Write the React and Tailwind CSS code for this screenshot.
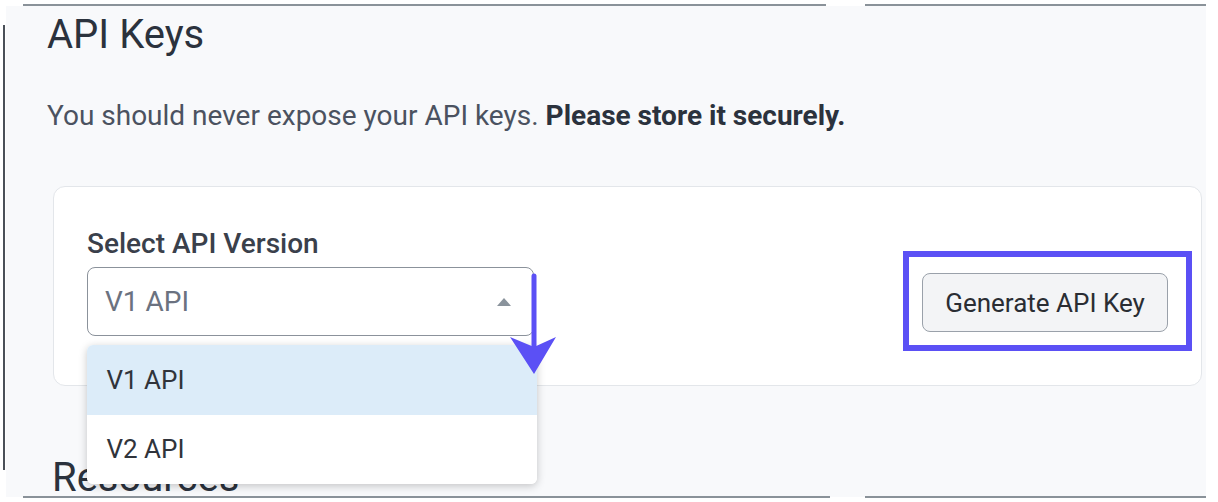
export default function App() {
  return (
    <div
      className="relative w-[1218px] h-[502px] overflow-hidden bg-white pt-[6px] pl-[6px]"
      style={{ fontFamily: "Roboto, 'Noto Sans', sans-serif" }}
    >
      {/* page */}
      <div className="w-[1200px] h-[491px] bg-[#f8f9fb] flex flex-col">
        <header className="pl-[41px] pt-[9px] flex flex-col">
          <h1 className="text-[40px] leading-none text-[#2b323d] font-normal">API Keys</h1>
          <p className="mt-[47px] text-[28px] leading-none text-[#4b5260]">
            You should never expose your API keys.{" "}
            <span className="font-bold text-[#2b323d]">Please store it securely.</span>
          </p>
        </header>

        <section className="ml-[47px] mt-[56px] w-[1149px] h-[200px] shrink-0 rounded-[12px] border border-[#e3e6ea] bg-white flex items-start">
          <div className="pl-[33px] pt-[43px] flex flex-col">
            <label className="text-[28px] leading-none font-medium text-[#3a404b]">Select API Version</label>
            <div className="relative mt-[9px] w-[447px] h-[69px] rounded-[8px] border-[1.5px] border-[#8b929b] flex items-center justify-between pl-[17px] pr-[21px]">
              <span className="text-[28px] leading-none text-[#6b7280]">V1 API</span>
              <svg width="16" height="10" viewBox="0 0 16 10">
                <path d="M1 9 L8 1 L15 9 Z" fill="#8a939c" />
              </svg>

              {/* open dropdown list */}
              <ul className="absolute left-[-1.5px] top-[77px] z-10 w-[450px] rounded-[6px] bg-white shadow-[0_2px_8px_rgba(0,0,0,0.22)] overflow-hidden flex flex-col">
                <li className="h-[70px] bg-[#dcecf9] flex items-center pl-[20px] text-[26px] text-[#30343b]">V1 API</li>
                <li className="h-[69px] bg-white flex items-center pl-[20px] text-[26px] text-[#30343b]">V2 API</li>
              </ul>

              {/* annotation arrow */}
              <svg className="absolute left-[417px] top-[3px] z-20" width="52" height="106" viewBox="0 0 52 106">
                <line x1="29" y1="5" x2="29" y2="80" stroke="#5b50f5" strokeWidth="5" strokeLinecap="round" />
                <path d="M5 66 L29 76 L51 66 L29 103 Z" fill="#5b50f5" />
              </svg>
            </div>
          </div>

          <div className="ml-auto mr-[9px] mt-[64px] border-[6px] border-[#5b50f5] pl-[13px] pr-[18px] pt-[16px] pb-[13px]">
            <button className="w-[246px] h-[59px] rounded-[8px] border-[1.5px] border-[#9aa1aa] bg-[#f3f4f6] text-[26px] leading-none text-[#2a2d33]">
              Generate API Key
            </button>
          </div>
        </section>

        <h2 className="pl-[46px] mt-[72px] text-[40px] leading-none text-[#2b323d] font-normal">Resources</h2>
      </div>

      {/* editor selection frame */}
      <div className="absolute left-[23px] top-[4px] w-[803px] h-[2px] bg-[#8a9299]" />
      <div className="absolute left-[865px] top-[4px] w-[341px] h-[2px] bg-[#8a9299]" />
      <div className="absolute left-[23px] top-[496px] w-[807px] h-[2px] bg-[#8a9299]" />
      <div className="absolute left-[865px] top-[496px] w-[341px] h-[2px] bg-[#8a9299]" />
      <div className="absolute left-[3px] top-[25px] w-[2px] h-[445px] bg-[#4a5058]" />
    </div>
  );
}
